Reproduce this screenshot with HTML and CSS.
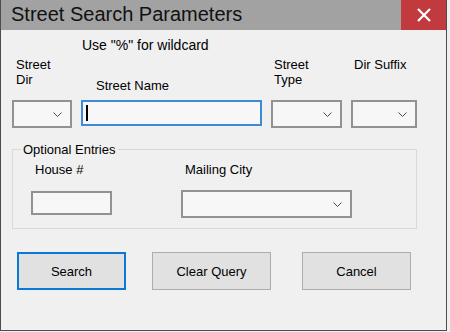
FILE: index.html
```html
<!DOCTYPE html>
<html lang="en">
<head>
    <meta charset="UTF-8">
    <meta name="viewport" content="width=device-width, initial-scale=1.0">
    <title>Street Search Parameters</title>
    <link rel="stylesheet" href="styles.css">
</head>
<body>
    <div class="window">
        <div class="titlebar">
            <span class="title">Street Search Parameters</span>
            <button class="close" aria-label="Close">
                <svg width="16" height="16" viewBox="0 0 16 16"><path d="M2 2L14 14M14 2L2 14" stroke="#ffffff" stroke-width="2.2" fill="none"/></svg>
            </button>
        </div>
        <div class="content">
            <p class="hint">Use "%" for wildcard</p>
            <div class="street-grid labels">
                <label class="lbl-dir">Street<br>Dir</label>
                <label class="lbl-name">Street Name</label>
                <label class="lbl-type">Street<br>Type</label>
                <label class="lbl-suffix">Dir Suffix</label>
            </div>
            <div class="street-grid fields">
                <div class="combo"><svg width="9" height="5" viewBox="0 0 9 5"><polyline points="0.5,0.5 4.5,4.5 8.5,0.5" stroke="#4a4a4a" fill="none"/></svg></div>
                <div class="textbox focused"><span class="caret"></span></div>
                <div class="combo"><svg width="9" height="5" viewBox="0 0 9 5"><polyline points="0.5,0.5 4.5,4.5 8.5,0.5" stroke="#4a4a4a" fill="none"/></svg></div>
                <div class="combo"><svg width="9" height="5" viewBox="0 0 9 5"><polyline points="0.5,0.5 4.5,4.5 8.5,0.5" stroke="#4a4a4a" fill="none"/></svg></div>
            </div>
            <fieldset class="optional">
                <legend>Optional Entries</legend>
                <div class="optional-grid labels">
                    <label>House #</label>
                    <label>Mailing City</label>
                </div>
                <div class="optional-grid fields">
                    <div class="textbox house"></div>
                    <div class="combo"><svg width="9" height="5" viewBox="0 0 9 5"><polyline points="0.5,0.5 4.5,4.5 8.5,0.5" stroke="#4a4a4a" fill="none"/></svg></div>
                </div>
            </fieldset>
            <div class="actions">
                <button class="btn default">Search</button>
                <button class="btn wide">Clear Query</button>
                <button class="btn cancel">Cancel</button>
            </div>
        </div>
    </div>
</body>
</html>
```
FILE: styles.css
```css
body {
    margin: 0;
    background-color: #f0f0f0;
    font-family: "Liberation Sans", Arial, sans-serif;
    font-size: 13px;
    color: #000000;
}
.window {
    width: 447px;
    height: 331px;
    box-sizing: border-box;
    border: 1px solid #4d4d4d;
    border-top: none;
    background-color: #f0f0f0;
}
.titlebar {
    display: flex;
    height: 30px;
    background-color: #a2a2a2;
}
.title {
    padding: 0 0 2px 10px;
    font-size: 20px;
    line-height: 28px;
    color: #111111;
}
.close {
    margin-left: auto;
    width: 45px;
    height: 30px;
    border: none;
    padding: 0;
    background-color: #c13b3e;
    display: flex;
    align-items: center;
    justify-content: center;
}
.content {
    padding: 7px 0 0 11px;
}
.hint {
    margin: 0 0 0 70px;
    font-size: 14px;
    line-height: 16px;
}
.street-grid {
    display: grid;
    grid-template-columns: 60px 181px 71px 66px;
    column-gap: 9px;
    align-items: start;
}
.labels {
    line-height: 15px;
}
.street-grid.labels {
    margin-top: 4px;
}
.street-grid.fields {
    margin-top: 7px;
}
.lbl-dir { padding-left: 4px; }
.lbl-name { padding: 21px 0 0 15px; }
.lbl-type { padding-left: 3px; }
.lbl-suffix { padding-left: 3px; }
.combo {
    height: 28px;
    box-sizing: border-box;
    border: 2px solid #929292;
    background-color: #f7f7f7;
    display: flex;
    align-items: center;
    justify-content: flex-end;
    padding-right: 8px;
}
.textbox {
    height: 26px;
    box-sizing: border-box;
    border: 2px solid #929292;
    background-color: #f7f7f7;
}
.textbox.focused {
    border-color: #3d8ad6;
    display: flex;
    align-items: center;
    padding-left: 3px;
}
.caret {
    width: 2px;
    height: 16px;
    background-color: #000000;
}
.optional {
    margin: 14px 0 0 0;
    width: 405px;
    box-sizing: border-box;
    padding: 0 0 10px 18px;
    border: 1px solid #d9d9d9;
    min-width: 0;
}
.optional legend {
    margin-left: -10px;
    padding: 0 2px;
    line-height: 15px;
}
.optional-grid {
    display: grid;
    grid-template-columns: 81px 171px;
    column-gap: 69px;
    align-items: start;
}
.optional-grid.labels {
    margin-top: 5px;
}
.optional-grid.labels label {
    padding-left: 4px;
}
.optional-grid.fields {
    margin-top: 13px;
}
.textbox.house {
    height: 24px;
    margin-top: 1px;
}
.actions {
    display: flex;
    gap: 26px;
    margin: 23px 0 0 5px;
}
.btn {
    width: 109px;
    height: 38px;
    box-sizing: border-box;
    border: 1px solid #adadad;
    background-color: #e1e1e1;
    font-family: "Liberation Sans", Arial, sans-serif;
    font-size: 13px;
    color: #000000;
    padding: 0;
}
.btn.default {
    border: 2px solid #0a78d6;
}
.btn.wide {
    width: 119px;
}
.btn.cancel {
    margin-left: 5px;
}
```
